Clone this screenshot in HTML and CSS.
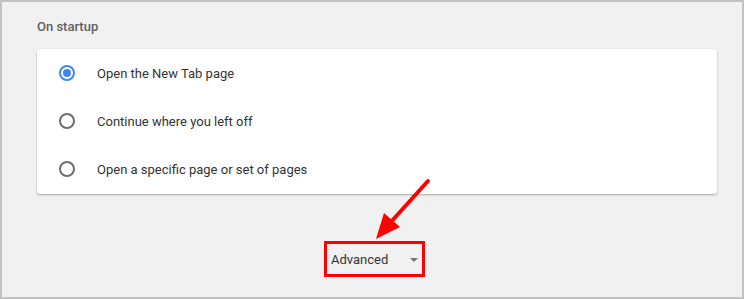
FILE: index.html
```html
<!DOCTYPE html>
<html>
<head>
<meta charset="utf-8">
<link rel="stylesheet" href="styles.css">
</head>
<body>
<div class="frame">
  <h2 class="section-title">On startup</h2>
  <div class="card">
    <div class="row">
      <span class="radio checked"></span>
      <span class="label">Open the New Tab page</span>
    </div>
    <div class="row">
      <span class="radio"></span>
      <span class="label">Continue where you left off</span>
    </div>
    <div class="row">
      <span class="radio"></span>
      <span class="label">Open a specific page or set of pages</span>
    </div>
  </div>
  <div class="advanced-wrap">
    <div class="advanced">
      <span class="adv-text">Advanced</span>
      <span class="caret"></span>
    </div>
  </div>
  <svg class="arrow" width="70" height="70" viewBox="0 0 70 70">
    <line x1="62" y1="4" x2="24" y2="46" stroke="#f00" stroke-width="4" stroke-linecap="round"/>
    <polygon points="10,62 18,36 34,50" fill="#f00"/>
  </svg>
</div>
</body>
</html>
```

FILE: styles.css
```css
* { box-sizing: border-box; }
html, body { margin: 0; padding: 0; }
body {
  width: 744px;
  height: 299px;
  font-family: Roboto, "Noto Sans", sans-serif;
}
.frame {
  position: relative;
  width: 744px;
  height: 299px;
  border: 2px solid #c2c2c2;
  background: #f1f1f1;
  padding: 17px 25px 0 35px;
}
.section-title {
  margin: 0 0 14px 0;
  font-size: 13px;
  line-height: 16px;
  font-weight: 500;
  color: #5f5f5f;
}
.card {
  background: #fff;
  border-radius: 3px;
  box-shadow: 0 1px 2px rgba(0,0,0,0.3), 0 0 1px rgba(0,0,0,0.08);
  padding-bottom: 1px;
}
.row {
  height: 48px;
  display: flex;
  align-items: center;
  padding-left: 22px;
}
.radio {
  width: 16px;
  height: 16px;
  border: 2px solid #6e6e6e;
  border-radius: 50%;
  position: relative;
  flex: none;
}
.radio.checked {
  border-color: #4285f4;
}
.radio.checked::after {
  content: "";
  position: absolute;
  left: 2px;
  top: 2px;
  width: 8px;
  height: 8px;
  border-radius: 50%;
  background: #4285f4;
}
.label {
  margin-left: 22px;
  font-size: 13px;
  color: #333;
}
.advanced-wrap {
  display: flex;
  justify-content: center;
  margin-top: 47px;
  padding-right: 5px;
}
.advanced {
  width: 101px;
  height: 36px;
  border: 3px solid #f00;
  display: flex;
  align-items: center;
  padding-left: 4px;
  padding-right: 4px;
  justify-content: space-between;
}
.adv-text {
  font-size: 13px;
  color: #333;
  padding-top: 1px;
}
.caret {
  width: 0;
  height: 0;
  border-left: 4px solid transparent;
  border-right: 4px solid transparent;
  border-top: 4px solid #777;
  margin-top: 2px;
}
.arrow {
  position: absolute;
  left: 364px;
  top: 175px;
}
```
